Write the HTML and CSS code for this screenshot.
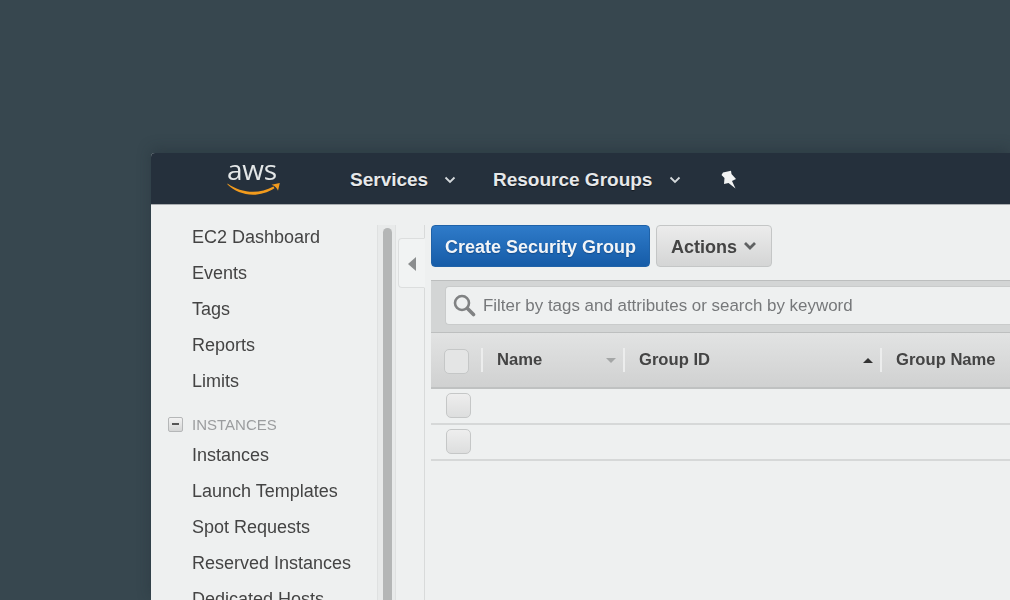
FILE: index.html
```html
<!DOCTYPE html>
<html>
<head>
  <meta charset="UTF-8">
  <meta name="viewport" content="width=device-width, initial-scale=1">
  <title>Security Groups | EC2 Management Console</title>
  <link rel="stylesheet" href="styles.css">
</head>

<body>
  <div class="console">
    <!-- top bar -->
    <header class="topbar">
      <div class="logo">
        <span class="logo-text">aws</span>
        <svg class="logo-smile" width="54" height="13" viewBox="0 0 54 13">
          <path d="M.5 1.500C8 7 17 9.800 26 9.800c7 0 14-2 20.500-5.300l1 1.800C41 10.500 33 12.800 26 12.800 16 12.800 7 8.500 .5 2.500z" fill="#f29b1d"/>
          <path d="M44.500 2.800 52.800 1 51 8.800C50.300 6.300 48 4 44.500 2.800z" fill="#f29b1d"/>
        </svg>
      </div>
      <a class="top-link top-services">Services
        <svg class="chev" width="12" height="8" viewBox="0 0 12 8"><path d="M1.500 1.500 6 6l4.500-4.500" fill="none" stroke="#d5d9dc" stroke-width="1.800"/></svg>
      </a>
      <a class="top-link top-groups">Resource Groups
        <svg class="chev" width="12" height="8" viewBox="0 0 12 8"><path d="M1.500 1.500 6 6l4.500-4.500" fill="none" stroke="#d5d9dc" stroke-width="1.800"/></svg>
      </a>
      <svg class="pin" width="16" height="19" viewBox="0 0 16 19">
        <path d="M2 2.500 10 .8 10.500 4 15 9 11 11 14.500 18.500 7.500 13 3 14 3.500 8 .5 5z" fill="#f2f3f3"/>
      </svg>
    </header>

    <div class="body-row">
      <!-- left nav -->
      <nav class="sidenav">
        <ul class="nav-list">
          <li>EC2 Dashboard</li>
          <li>Events</li>
          <li>Tags</li>
          <li>Reports</li>
          <li>Limits</li>
        </ul>
        <div class="nav-head"><span class="minus"></span>INSTANCES</div>
        <ul class="nav-list">
          <li>Instances</li>
          <li>Launch Templates</li>
          <li>Spot Requests</li>
          <li>Reserved Instances</li>
          <li>Dedicated Hosts</li>
        </ul>
      </nav>
      <div class="nav-scroll"><div class="nav-thumb"></div></div>
      <div class="collapse-col">
        <div class="collapse-tab"><span class="tab-arrow"></span></div>
      </div>

      <!-- main content -->
      <main class="content">
        <div class="toolbar">
          <button class="btn btn-primary">Create Security Group</button>
          <button class="btn btn-actions">Actions
            <svg width="14" height="10" viewBox="0 0 14 10"><path d="M2 2 7 7l5-5" fill="none" stroke="#5f6162" stroke-width="2.800"/></svg>
          </button>
        </div>
        <div class="filter-band">
          <div class="filter-input">
            <svg width="23" height="23" viewBox="0 0 23 23">
              <circle cx="9" cy="9" r="7" fill="none" stroke="#808283" stroke-width="2.600"/>
              <path d="M14.500 14.500l6 6" stroke="#808283" stroke-width="3.600" stroke-linecap="round"/>
            </svg>
            <span>Filter by tags and attributes or search by keyword</span>
          </div>
        </div>
        <div class="table-head">
          <div class="cell-check"><span class="check check-head"></span></div>
          <div class="th th-name">Name<span class="sort sort-down"></span></div>
          <div class="th th-group">Group ID<span class="sort sort-up"></span></div>
          <div class="th th-gname">Group Name</div>
        </div>
        <div class="table-row"><span class="check"></span></div>
        <div class="table-row"><span class="check"></span></div>
      </main>
    </div>
  </div>
</body>

</html>
```

FILE: styles.css
```css
html, body {
  margin: 0;
  height: 100%;
  overflow: hidden;
}
body {
  background: #37474f;
  font-family: "Liberation Sans", Arial, sans-serif;
  padding: 153px 0 0 151px;
  box-sizing: border-box;
}
ul {
  list-style: none;
  margin: 0;
  padding: 0;
}
.console {
  width: 859px;
  height: 447px;
  background: #eef0f0;
  border-radius: 4px 0 0 0;
  box-shadow: 0 -4px 14px rgba(30, 40, 48, 0.35);
  filter: blur(0.4px);
}

/* top bar */
.topbar {
  height: 52px;
  background: #25303c;
  border-bottom: 1px solid #a9adb0;
  border-radius: 4px 0 0 0;
  box-sizing: border-box;
  display: flex;
  align-items: center;
  color: #eceef0;
}
.logo {
  width: 199px;
  padding-left: 76px;
  box-sizing: border-box;
  height: 51px;
  position: relative;
}
.logo-text {
  display: block;
  font-family: "Open Sans", sans-serif;
  font-size: 28px;
  line-height: 30px;
  margin-top: 1px;
  color: #e4e7e8;
  letter-spacing: -0.2px;
}
.logo-smile {
  position: absolute;
  left: 76px;
  top: 29px;
}
.top-link {
  display: flex;
  align-items: center;
  font-size: 19px;
  font-weight: bold;
  color: #e6e8ea;
  white-space: nowrap;
  padding-top: 2px;
  text-shadow: 0 1px 1px rgba(0, 0, 0, 0.5);
}
.top-link .chev {
  margin-left: 16px;
}
.top-services {
  width: 143px;
}
.top-groups {
  width: 228px;
}
.top-groups .chev {
  margin-left: 17px;
}
.pin {
  margin-top: 1px;
}

.body-row {
  display: flex;
  height: 395px;
}

/* left nav */
.sidenav {
  width: 226px;
  padding: 14px 0 0 41px;
  box-sizing: border-box;
  color: #444;
  font-size: 18px;
  flex: none;
}
.nav-list li {
  height: 36px;
  line-height: 36px;
  white-space: nowrap;
}
.nav-head {
  display: flex;
  align-items: center;
  height: 36px;
  margin: 7px 0 -5px -24px;
  padding-top: 1px;
  box-sizing: border-box;
  font-size: 15px;
  color: #9b9d9f;
}
.minus {
  width: 13px;
  height: 13px;
  margin-right: 9px;
  border: 1px solid #b5b7b8;
  border-radius: 2px;
  background: linear-gradient(#f2f2f2, #d5d6d6);
  position: relative;
}
.minus::after {
  content: "";
  position: absolute;
  left: 3px;
  top: 5px;
  width: 7px;
  height: 2px;
  background: #555;
}
.nav-scroll {
  width: 19px;
  flex: none;
  background: #e8eaea;
  border-left: 1px solid #dfe1e1;
  border-right: 1px solid #dfe1e1;
  box-sizing: border-box;
  margin-top: 20px;
  padding: 3px 3px 0 5px;
}
.nav-thumb {
  height: 372px;
  background: #b4b6b6;
  border-radius: 5px 5px 0 0;
}
.collapse-col {
  width: 29px;
  flex: none;
  box-sizing: border-box;
  border-right: 1px solid #d8dada;
  margin-top: 20px;
  position: relative;
}
.collapse-tab {
  position: absolute;
  left: 2px;
  top: 13px;
  width: 27px;
  height: 50px;
  background: #f1f3f3;
  border: 1px solid #dcdede;
  border-right-color: #f1f3f3;
  border-radius: 4px 0 0 4px;
  box-sizing: border-box;
}
.tab-arrow {
  position: absolute;
  left: 9px;
  top: 18px;
  border: 7px solid transparent;
  border-left-width: 0;
  border-right: 8px solid #8b8d8e;
}

/* main */
.content {
  flex: 1;
  padding: 20px 0 0 6px;
  min-width: 0;
}
.toolbar {
  display: flex;
  gap: 6px;
  height: 42px;
}
.btn {
  font-family: "Liberation Sans", Arial, sans-serif;
  font-size: 18px;
  font-weight: bold;
  border-radius: 4px;
  padding: 2px 0 0;
  height: 42px;
}
.btn-primary {
  width: 219px;
  color: #f2f5f8;
  background: linear-gradient(#2f7bc9, #165ca8);
  border: 1px solid #1f62a8;
  text-shadow: 0 1px 1px rgba(10, 50, 100, 0.5);
}
.btn-actions {
  width: 116px;
  color: #444;
  background: linear-gradient(#ececec, #d4d5d5);
  border: 1px solid #c4c6c6;
  display: flex;
  align-items: center;
  gap: 6px;
  padding-left: 14px;
}
.btn-actions svg {
  margin-top: -3px;
}
.filter-band {
  margin-top: 13px;
  height: 52px;
  background: #d3d5d5;
  border-top: 1px solid #bcbebe;
  box-sizing: border-box;
  padding: 5px 0 0 14px;
}
.filter-input {
  height: 39px;
  background: #eef0f0;
  border: 1px solid #c9cbcb;
  border-right: 0;
  border-radius: 4px 0 0 4px;
  display: flex;
  align-items: center;
  padding-left: 7px;
  gap: 7px;
  box-sizing: border-box;
  font-size: 16.93px;
  color: #76787a;
  white-space: nowrap;
}
.table-head {
  height: 57px;
  background: linear-gradient(#e2e3e3, #d0d1d1);
  border-top: 1px solid #bdbfbf;
  border-bottom: 2px solid #bfc1c1;
  box-sizing: border-box;
  display: flex;
  align-items: center;
  color: #444;
  font-size: 16.6px;
  font-weight: bold;
}
.cell-check {
  width: 50px;
  padding: 2px 0 0 13px;
  box-sizing: border-box;
  flex: none;
  display: flex;
}
.check {
  display: block;
  width: 25px;
  height: 25px;
  border: 1px solid #c5c7c7;
  border-radius: 5px;
  background: linear-gradient(#eeeeee, #dddede);
  box-sizing: border-box;
}
.check-head {
  background: #e4e5e5;
}
.th {
  height: 24px;
  line-height: 24px;
  border-left: 2px solid #eceded;
  padding-left: 14px;
  box-sizing: border-box;
  flex: none;
  position: relative;
  white-space: nowrap;
}
.th-name {
  width: 142px;
}
.th-group {
  width: 257px;
}
.th-gname {
  flex: 1;
  min-width: 0;
}
.sort {
  position: absolute;
  top: 10px;
  right: 7px;
  border: 5px solid transparent;
  border-top: 0;
  border-bottom: 5px solid #333;
}
.sort-down {
  border-bottom: 0;
  border-top: 5px solid #a4a6a6;
}
.table-row {
  height: 36px;
  border-bottom: 2px solid #d6d8d8;
  box-sizing: border-box;
  padding: 4px 0 0 15px;
}
```
